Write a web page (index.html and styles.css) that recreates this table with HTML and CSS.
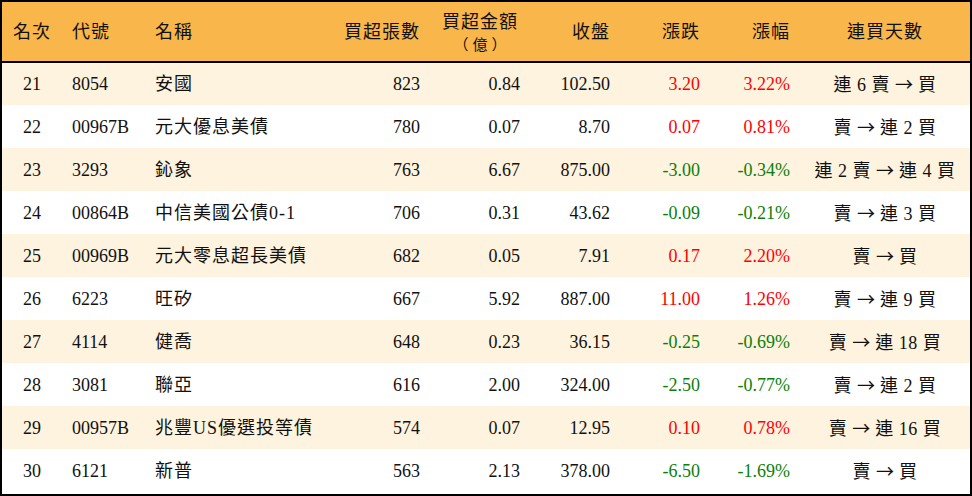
FILE: index.html
```html
<!DOCTYPE html>
<html lang="zh-Hant">
<head>
<meta charset="utf-8">
<link rel="stylesheet" href="styles.css">
</head>
<body>
<div class="frame">
<table class="rank">
  <colgroup>
    <col class="c1"><col class="c2"><col class="c3"><col class="c4"><col class="c5"><col class="c6"><col class="c7"><col class="c8"><col class="c9">
  </colgroup>
  <thead>
    <tr>
      <th class="ctr">名次</th>
      <th class="lft">代號</th>
      <th class="lft">名稱</th>
      <th class="rgt">買超張數</th>
      <th class="ctr two"><span class="line">買超金額</span><span class="line cjk">（億）</span></th>
      <th class="rgt">收盤</th>
      <th class="rgt">漲跌</th>
      <th class="rgt">漲幅</th>
      <th class="ctr">連買天數</th>
    </tr>
  </thead>
  <tbody>
    <tr class="alt"><td class="ctr">21</td><td class="lft">8054</td><td class="lft name">安國</td><td class="rgt">823</td><td class="rgt">0.84</td><td class="rgt">102.50</td><td class="rgt up">3.20</td><td class="rgt up">3.22%</td><td class="ctr days">連 6 賣 <span class="arrow">→</span> 買</td></tr>
    <tr><td class="ctr">22</td><td class="lft">00967B</td><td class="lft name">元大優息美債</td><td class="rgt">780</td><td class="rgt">0.07</td><td class="rgt">8.70</td><td class="rgt up">0.07</td><td class="rgt up">0.81%</td><td class="ctr days">賣 <span class="arrow">→</span> 連 2 買</td></tr>
    <tr class="alt"><td class="ctr">23</td><td class="lft">3293</td><td class="lft name">鈊象</td><td class="rgt">763</td><td class="rgt">6.67</td><td class="rgt">875.00</td><td class="rgt down">-3.00</td><td class="rgt down">-0.34%</td><td class="ctr days">連 2 賣 <span class="arrow">→</span> 連 4 買</td></tr>
    <tr><td class="ctr">24</td><td class="lft">00864B</td><td class="lft name">中信美國公債0-1</td><td class="rgt">706</td><td class="rgt">0.31</td><td class="rgt">43.62</td><td class="rgt down">-0.09</td><td class="rgt down">-0.21%</td><td class="ctr days">賣 <span class="arrow">→</span> 連 3 買</td></tr>
    <tr class="alt"><td class="ctr">25</td><td class="lft">00969B</td><td class="lft name">元大零息超長美債</td><td class="rgt">682</td><td class="rgt">0.05</td><td class="rgt">7.91</td><td class="rgt up">0.17</td><td class="rgt up">2.20%</td><td class="ctr days">賣 <span class="arrow">→</span> 買</td></tr>
    <tr><td class="ctr">26</td><td class="lft">6223</td><td class="lft name">旺矽</td><td class="rgt">667</td><td class="rgt">5.92</td><td class="rgt">887.00</td><td class="rgt up">11.00</td><td class="rgt up">1.26%</td><td class="ctr days">賣 <span class="arrow">→</span> 連 9 買</td></tr>
    <tr class="alt"><td class="ctr">27</td><td class="lft">4114</td><td class="lft name">健喬</td><td class="rgt">648</td><td class="rgt">0.23</td><td class="rgt">36.15</td><td class="rgt down">-0.25</td><td class="rgt down">-0.69%</td><td class="ctr days">賣 <span class="arrow">→</span> 連 18 買</td></tr>
    <tr><td class="ctr">28</td><td class="lft">3081</td><td class="lft name">聯亞</td><td class="rgt">616</td><td class="rgt">2.00</td><td class="rgt">324.00</td><td class="rgt down">-2.50</td><td class="rgt down">-0.77%</td><td class="ctr days">賣 <span class="arrow">→</span> 連 2 買</td></tr>
    <tr class="alt"><td class="ctr">29</td><td class="lft">00957B</td><td class="lft name">兆豐US優選投等債</td><td class="rgt">574</td><td class="rgt">0.07</td><td class="rgt">12.95</td><td class="rgt up">0.10</td><td class="rgt up">0.78%</td><td class="ctr days">賣 <span class="arrow">→</span> 連 16 買</td></tr>
    <tr><td class="ctr">30</td><td class="lft">6121</td><td class="lft name">新普</td><td class="rgt">563</td><td class="rgt">2.13</td><td class="rgt">378.00</td><td class="rgt down">-6.50</td><td class="rgt down">-1.69%</td><td class="ctr days">賣 <span class="arrow">→</span> 買</td></tr>
  </tbody>
</table>
</div>
</body>
</html>
```

FILE: styles.css
```css
html, body {
  margin: 0;
  padding: 0;
  background: #ffffff;
}

.frame {
  width: 968px;
  height: 492px;
  border: 2px solid #000000;
  overflow: hidden;
}

.rank {
  width: 968px;
  border-collapse: collapse;
  table-layout: fixed;
  font-family: "Liberation Serif", "Noto Sans CJK TC", serif;
  font-size: 18px;
  color: #111111;
}

.c1 { width: 60px; }
.c2 { width: 83px; }
.c3 { width: 185px; }
.c4 { width: 100px; }
.c5 { width: 100px; }
.c6 { width: 90px; }
.c7 { width: 90px; }
.c8 { width: 90px; }
.c9 { width: 170px; }

.rank thead tr {
  background: #f9b64a;
  height: 60px;
  border-bottom: 2px solid #000000;
}

.rank th {
  font-weight: normal;
  padding: 0 10px;
  letter-spacing: 1px;
  line-height: 20px;
  white-space: nowrap;
}

.rank th.two {
  padding-top: 2px;
}

.line {
  display: block;
  line-height: 22px;
}

.cjk {
  font-family: "Noto Sans CJK TC", sans-serif;
  font-size: 15px;
  letter-spacing: 4px;
  padding-left: 4px;
}

.rank tbody tr {
  height: 43px;
  background: #ffffff;
}

.rank tbody tr.alt {
  background: #fef3de;
}

.rank td {
  padding: 0 10px;
  white-space: nowrap;
  line-height: 20px;
}

.ctr { text-align: center; }
.lft { text-align: left; }
.rgt { text-align: right; }

.name { letter-spacing: 1px; }
.days { letter-spacing: 0.5px; }

.arrow {
  font-family: "Noto Sans CJK TC", sans-serif;
  letter-spacing: 0;
}

.up { color: #ff0000; }
.down { color: #0a7f0a; }
```
